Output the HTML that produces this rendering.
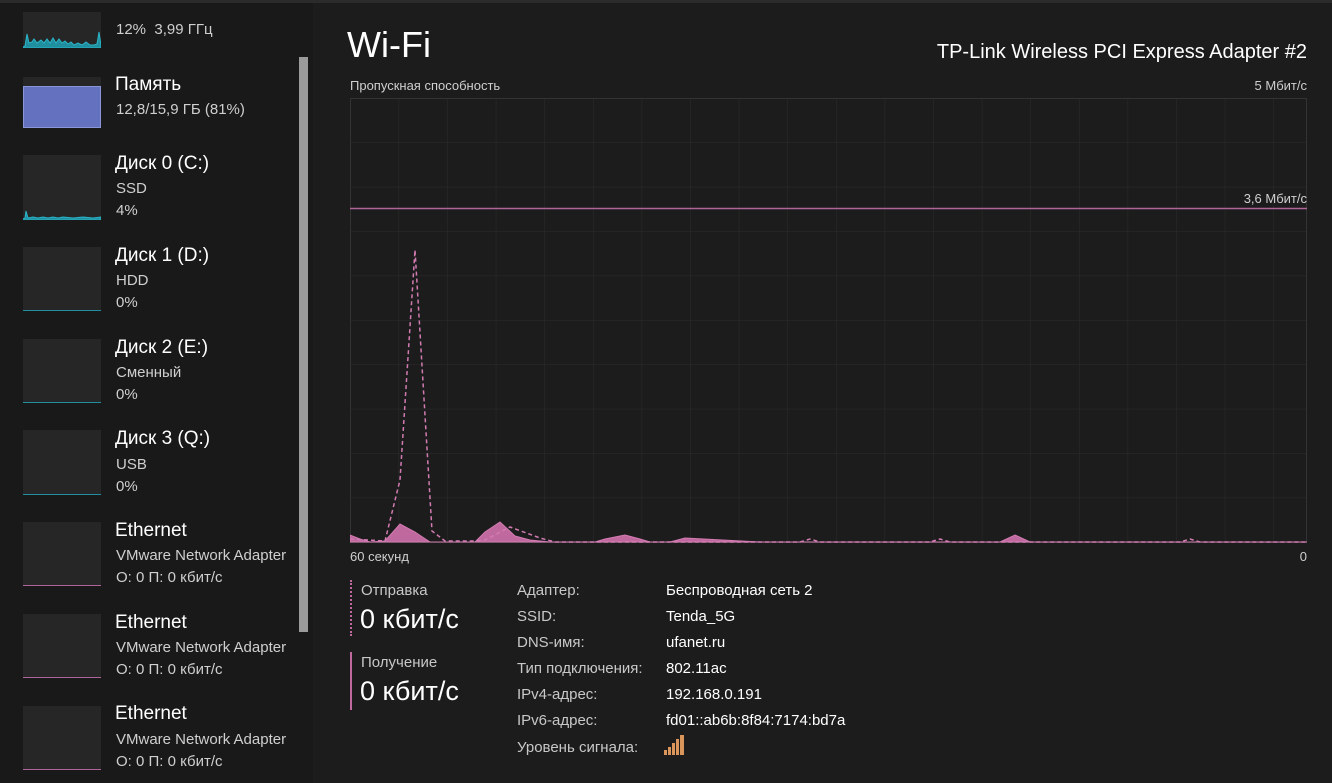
<!DOCTYPE html>
<html><head><meta charset="utf-8"><style>
*{margin:0;padding:0;box-sizing:border-box}
body{width:1332px;height:783px;background:#1c1c1c;font-family:"Segoe UI","Liberation Sans","DejaVu Sans",sans-serif;color:#fff;position:relative;overflow:hidden}
.side{position:absolute;left:0;top:0;width:313px;height:783px;background:#191919}
.topline{position:absolute;left:0;top:0;width:1332px;height:3px;background:#2b2b2b}
.th{position:absolute;left:23px;width:78px;background:#262626}
.t{position:absolute;left:115px;font-size:19px;color:#fff}
.s{position:absolute;left:116px;font-size:15px;color:#cfcfcf;white-space:nowrap;width:176px;overflow:hidden}
.ab{position:absolute;font-size:13px;color:#cfcfcf}
.lbl{position:absolute;left:517px;font-size:15px;color:#c8c8c8}
.val{position:absolute;left:666px;font-size:15px;color:#fff}
.pl{position:absolute;left:23px;width:78px;height:1px;background:#b0659a}
</style></head><body>
<div class="side"></div>
<div class="topline"></div>
<div style="position:absolute;left:299px;top:57px;width:9px;height:575px;background:#9b9b9b"></div>

<div class="th" style="top:12px;height:36px"></div>
<svg style="position:absolute;left:23px;top:12px" width="78" height="36"><path d="M0 35 L2 34 L4 22 L6 31 L9 30 L11 27 L14 31 L18 28 L21 31 L24 27 L27 31 L30 26 L33 31 L36 27 L39 31 L42 29 L45 32 L48 30 L51 33 L55 31 L59 33 L63 30 L67 33 L71 33 L74 32 L76 20 L78 33 L78 36 L0 36Z" fill="#1f8fa0" stroke="#2bb5c8" stroke-width="1"/></svg>
<div class="s" style="top:21px">12%&nbsp; 3,99 ГГц</div>

<div class="th" style="top:77px;height:51px"></div>
<div style="position:absolute;left:23px;top:86px;width:78px;height:42px;background:#6371bf;border:1px solid #8a96d8"></div>
<div class="t" style="top:74px">Память</div>
<div class="s" style="top:101px">12,8/15,9 ГБ (81%)</div>

<div class="th" style="top:155px;height:65px"></div>
<svg style="position:absolute;left:23px;top:155px" width="78" height="65"><path d="M0 64 L2 63 L3 56 L5 63 L10 62 L15 63 L20 62 L25 63 L30 62 L35 63 L40 62 L50 63 L60 62 L70 63 L78 62 L78 65 L0 65Z" fill="#1f8fa0" stroke="#2bb5c8" stroke-width="1"/></svg>
<div class="t" style="top:153px">Диск 0 (C:)</div>
<div class="s" style="top:180px">SSD</div>
<div class="s" style="top:202px">4%</div>

<div class="th" style="top:247px;height:64px"></div><div style="position:absolute;left:23px;top:310px;width:78px;height:1px;background:#1f8fa0"></div>
<div class="t" style="top:245px">Диск 1 (D:)</div>
<div class="s" style="top:272px">HDD</div>
<div class="s" style="top:294px">0%</div>

<div class="th" style="top:339px;height:64px"></div><div style="position:absolute;left:23px;top:402px;width:78px;height:1px;background:#1f8fa0"></div>
<div class="t" style="top:337px">Диск 2 (E:)</div>
<div class="s" style="top:364px">Сменный</div>
<div class="s" style="top:386px">0%</div>

<div class="th" style="top:430px;height:65px"></div><div style="position:absolute;left:23px;top:494px;width:78px;height:1px;background:#1f8fa0"></div>
<div class="t" style="top:428px">Диск 3 (Q:)</div>
<div class="s" style="top:456px">USB</div>
<div class="s" style="top:478px">0%</div>

<div class="th" style="top:522px;height:64px"></div><div class="pl" style="top:585px"></div>
<div class="t" style="top:520px">Ethernet</div>
<div class="s" style="top:547px">VMware Network Adapter</div>
<div class="s" style="top:569px">О: 0 П: 0 кбит/с</div>

<div class="th" style="top:614px;height:64px"></div><div class="pl" style="top:677px"></div>
<div class="t" style="top:612px">Ethernet</div>
<div class="s" style="top:639px">VMware Network Adapter</div>
<div class="s" style="top:661px">О: 0 П: 0 кбит/с</div>

<div class="th" style="top:706px;height:64px"></div><div class="pl" style="top:769px"></div>
<div class="t" style="top:703px">Ethernet</div>
<div class="s" style="top:731px">VMware Network Adapter</div>
<div class="s" style="top:753px">О: 0 П: 0 кбит/с</div>

<div style="position:absolute;left:347px;top:24px;font-size:36px;font-weight:300">Wi-Fi</div>
<div style="position:absolute;right:25px;top:41px;font-size:20px">TP-Link Wireless PCI Express Adapter #2</div>
<div class="ab" style="left:350px;top:78px">Пропускная способность</div>
<div class="ab" style="right:25px;top:78px">5 Мбит/с</div>

<svg style="position:absolute;left:350px;top:98px" width="957" height="445">
<defs><pattern id="g" width="48.6" height="44.4" patternUnits="userSpaceOnUse"><path d="M0 0 V44.4 M0 0 H48.6" stroke="#2c2c2c" stroke-width="1" fill="none"/></pattern></defs>
<rect x="0" y="0" width="957" height="445" fill="url(#g)"/>
<rect x="0.5" y="0.5" width="956" height="444" fill="none" stroke="#333"/>
<line x1="0" y1="110.5" x2="957" y2="110.5" stroke="#b0659a" stroke-width="1.5"/>
<path d="M0 444 L0 437 L10 441 L20 444 L35 443 L50 426 L65 434 L80 444 L125 444 L135 434 L150 424 L165 438 L180 442 L200 444 L245 444 L255 441 L275 437 L290 441 L300 444 L320 444 L335 440 L410 444 L650 444 L665 437 L680 444 L957 444Z" fill="#c0699f" stroke="#d27bb2" stroke-width="1"/>
<path d="M0 441 L35 443 L50 382 L65 152 L82 433 L95 443 L125 443 L135 442 L160 429 L190 440 L205 444 L450 444 L460 441 L470 444 L580 444 L590 441 L600 444 L830 444 L840 441 L850 444 L957 444" fill="none" stroke="#d27bb2" stroke-width="1.5" stroke-dasharray="4,3"/>
</svg>
<div class="ab" style="right:25px;top:191px">3,6 Мбит/с</div>
<div class="ab" style="left:350px;top:549px">60 секунд</div>
<div class="ab" style="right:25px;top:549px">0</div>

<div style="position:absolute;left:350px;top:580px;height:56px;border-left:2px dotted #c0699f"></div>
<div style="position:absolute;left:361px;top:582px;font-size:15px;color:#c8c8c8">Отправка</div>
<div style="position:absolute;left:360px;top:604px;font-size:27px;font-weight:300">0 кбит/с</div>
<div style="position:absolute;left:350px;top:652px;height:58px;border-left:2px solid #c0699f"></div>
<div style="position:absolute;left:361px;top:654px;font-size:15px;color:#c8c8c8">Получение</div>
<div style="position:absolute;left:360px;top:676px;font-size:27px;font-weight:300">0 кбит/с</div>

<div class="lbl" style="top:582px">Адаптер:</div><div class="val" style="top:582px">Беспроводная сеть 2</div>
<div class="lbl" style="top:608px">SSID:</div><div class="val" style="top:608px">Tenda_5G</div>
<div class="lbl" style="top:634px">DNS-имя:</div><div class="val" style="top:634px">ufanet.ru</div>
<div class="lbl" style="top:660px">Тип подключения:</div><div class="val" style="top:660px">802.11ac</div>
<div class="lbl" style="top:686px">IPv4-адрес:</div><div class="val" style="top:686px">192.168.0.191</div>
<div class="lbl" style="top:712px">IPv6-адрес:</div><div class="val" style="top:712px">fd01::ab6b:8f84:7174:bd7a</div>
<div class="lbl" style="top:739px">Уровень сигнала:</div>
<svg style="position:absolute;left:664px;top:735px" width="22" height="20"><g fill="#d9955a"><rect x="0" y="15" width="3" height="5"/><rect x="4" y="12" width="3" height="8"/><rect x="8" y="8" width="3" height="12"/><rect x="12" y="4" width="3" height="16"/><rect x="16" y="0" width="4" height="20"/></g></svg>
</body></html>
